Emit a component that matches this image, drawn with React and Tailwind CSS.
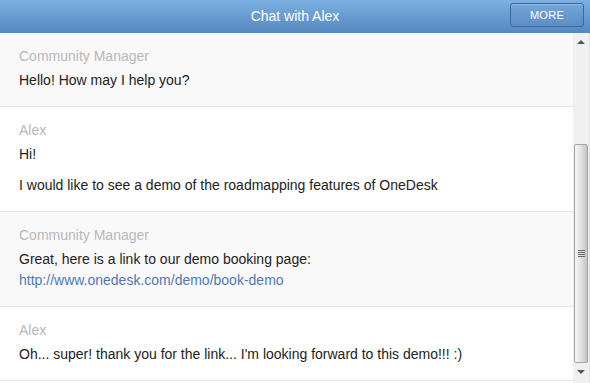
const messages = [
  { from: 'Community Manager', shade: true, lines: [['Hello! How may I help you?']] },
  {
    from: 'Alex',
    lines: [['Hi!'], ['I would like to see a demo of the roadmapping features of OneDesk']],
  },
  {
    from: 'Community Manager',
    shade: true,
    lines: [['Great, here is a link to our demo booking page:', { link: 'http://www.onedesk.com/demo/book-demo' }]],
  },
  { from: 'Alex', lines: [["Oh... super! thank you for the link... I'm looking forward to this demo!!! :)"]] },
];

function Message({ from, shade, lines }) {
  return (
    <div
      className={`border-b border-[#e6e6e6] pl-[19px] pr-4 pt-[13px] pb-[15px] ${
        shade ? 'bg-[#f9f9f9]' : 'bg-white'
      }`}
    >
      <div className="text-[14px] leading-[20px] text-[#b8b8b8]">{from}</div>
      <div className="mt-[4px] flex flex-col gap-[10px]">
        {lines.map((para, i) => (
          <p key={i} className="text-[14px] leading-[21px] text-[#222]">
            {para.map((part, j) =>
              typeof part === 'string' ? (
                <span key={j}>{part}</span>
              ) : (
                <span key={j}>
                  <br />
                  <a className="text-[#4f79b3]">{part.link}</a>
                </span>
              )
            )}
          </p>
        ))}
      </div>
    </div>
  );
}

function FakeScrollbar() {
  return (
    <div className="flex w-[17px] shrink-0 flex-col border-r border-[#e2e2e2] bg-[#f0f0f0]">
      <div className="flex h-[17px] items-center justify-center">
        <div className="h-0 w-0 border-x-[4px] border-b-[4px] border-x-transparent border-b-[#555]" />
      </div>
      <div className="h-[94px]" />
      <div className="relative mx-[1px] flex h-[219px] items-center justify-center rounded-[2px] border border-[#a3a3a3] bg-gradient-to-r from-[#f6f6f6] via-[#e2e2e2] to-[#c4c4c4]">
        <div className="flex flex-col gap-[1px]">
          <div className="h-[1px] w-[7px] bg-[#666]" />
          <div className="h-[1px] w-[7px] bg-[#666]" />
          <div className="h-[1px] w-[7px] bg-[#666]" />
          <div className="h-[1px] w-[7px] bg-[#666]" />
        </div>
      </div>
      <div className="flex h-[17px] items-center justify-center">
        <div className="h-0 w-0 border-x-[4px] border-t-[4px] border-x-transparent border-t-[#555]" />
      </div>
    </div>
  );
}

export default function App() {
  return (
    <div
      className="flex h-[383px] w-[590px] flex-col overflow-hidden bg-white"
      style={{ fontFamily: '"Liberation Sans", Arial, sans-serif' }}
    >
      <div className="relative flex h-[33px] shrink-0 items-center justify-center bg-gradient-to-b from-[#7cb0e2] to-[#5588be]">
        <span className="text-[14px] text-white">Chat with Alex</span>
        <button
          type="button"
          className="absolute right-[6px] top-[3px] h-[24px] w-[74px] rounded-[3px] border border-[#3e6898] bg-gradient-to-b from-[#74a6db] to-[#5c8ec5] text-[11px] tracking-[0.3px] text-white shadow-[inset_0_1px_0_rgba(255,255,255,0.25)]"
        >
          MORE
        </button>
      </div>
      <div className="flex min-h-0 flex-1">
        <div className="min-w-0 flex-1 overflow-hidden">
          {messages.map((m, i) => (
            <Message key={i} {...m} />
          ))}
        </div>
        <FakeScrollbar />
      </div>
    </div>
  );
}
